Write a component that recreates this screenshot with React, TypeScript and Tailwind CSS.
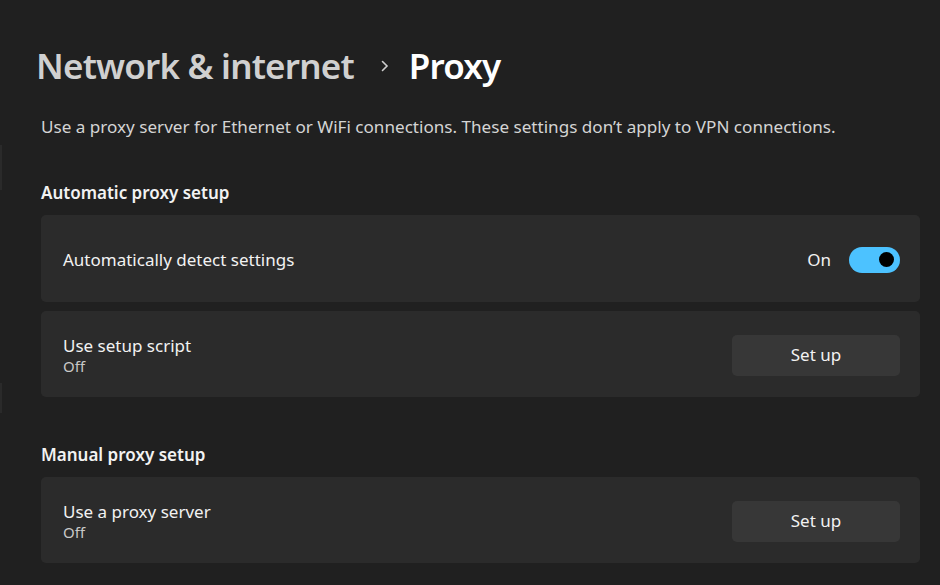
import React from "react";

function Card({ title, sub, right, h }: { title: string; sub?: string; right: React.ReactNode; h: string }) {
  return (
    <div className={`flex items-center justify-between rounded-[5px] bg-[#2b2b2b] pl-[22px] pr-[20px] pt-[2px] ${h}`}>
      <div className="flex flex-col">
        <span className="text-[17px] leading-[22px] text-[#f2f2f2]">{title}</span>
        {sub && <span className="text-[15px] leading-[19px] text-[#c8c8c8]">{sub}</span>}
      </div>
      {right}
    </div>
  );
}

function SetUpButton() {
  return (
    <button className="flex h-[41px] w-[168px] items-center justify-center rounded-[5px] bg-[#373737] text-[17px] text-[#f2f2f2]">
      Set up
    </button>
  );
}

export default function App() {
  return (
    <div className="flex h-[585px] w-[940px] overflow-hidden bg-[#202020] font-['Noto_Sans',sans-serif]">
      <div className="flex w-[2px] flex-col">
        <div className="mt-[145px] h-[45px] bg-[#2a2a2a]" />
        <div className="mt-[193px] h-[30px] bg-[#2a2a2a]" />
      </div>
      <div className="flex flex-1 flex-col pl-[39px] pr-[20px]">
        <div className="mt-[42px] flex items-center text-[35px] font-semibold leading-[48px] tracking-[-0.8px]">
          <span className="ml-[-5px] text-[#d0d0d0]">Network &amp; internet</span>
          <span className="ml-[25px] mr-[18px] flex items-center">
            <svg width="12" height="14" viewBox="0 0 12 14">
              <path d="M3.5 2.5 L8 7 L3.5 11.5" fill="none" stroke="#cfcfcf" strokeWidth="1.6" strokeLinecap="round" />
            </svg>
          </span>
          <span className="text-white">Proxy</span>
        </div>
        <p className="mt-[26px] text-[17.1px] leading-[22px] text-[#d4d4d4]">
          Use a proxy server for Ethernet or WiFi connections. These settings don’t apply to VPN connections.
        </p>
        <h2 className="mt-[44px] text-[17px] font-semibold leading-[22px] text-[#f2f2f2]">Automatic proxy setup</h2>
        <div className="mt-[11px] flex flex-col gap-[9px]">
          <Card
            title="Automatically detect settings"
            h="h-[87px]"
            right={
              <div className="flex items-center gap-[18px]">
                <span className="text-[17px] text-[#f2f2f2]">On</span>
                <div className="flex h-[26px] w-[51px] items-center justify-end rounded-full bg-[#4cc2ff] pr-[6px]">
                  <div className="h-[15px] w-[15px] rounded-full bg-black" />
                </div>
              </div>
            }
          />
          <Card title="Use setup script" sub="Off" h="h-[86px]" right={<SetUpButton />} />
        </div>
        <h2 className="mt-[47px] text-[17px] font-semibold leading-[22px] text-[#f2f2f2]">Manual proxy setup</h2>
        <div className="mt-[11px] flex flex-col">
          <Card title="Use a proxy server" sub="Off" h="h-[86px]" right={<SetUpButton />} />
        </div>
      </div>
    </div>
  );
}
